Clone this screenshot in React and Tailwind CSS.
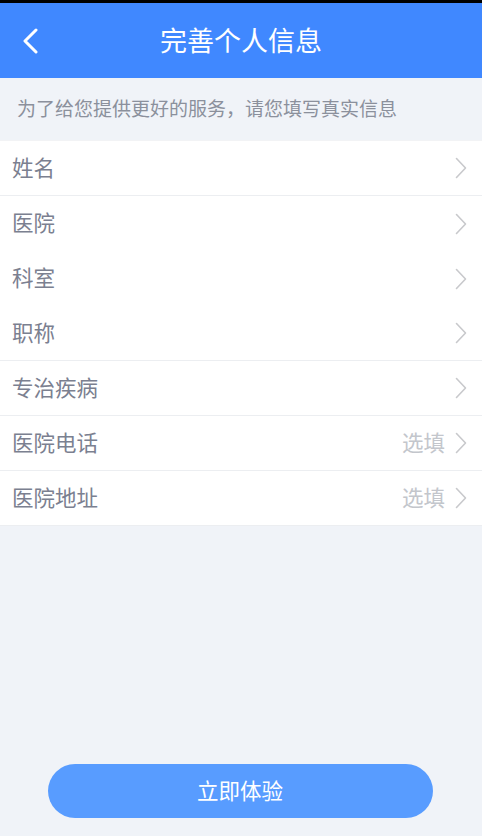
import { ChevronLeft } from "lucide-react";

const rows = [
  { label: "姓名", line: true },
  { label: "医院", line: false },
  { label: "科室", line: false },
  { label: "职称", line: true },
  { label: "专治疾病", line: true },
  { label: "医院电话", hint: "选填", line: true },
  { label: "医院地址", hint: "选填", line: true },
];

const Arrow = () => (
  <svg width="12" height="22" viewBox="0 0 12 22" fill="none" className="shrink-0">
    <path d="M1.5 1.5 L10.5 11 L1.5 20.5" stroke="#c8c9cc" strokeWidth="1.6" strokeLinecap="round" strokeLinejoin="round" />
  </svg>
);

const App = () => {
  return (
    <div
      className="w-[482px] h-[836px] bg-[#f0f3f8] flex flex-col overflow-hidden"
      style={{ fontFamily: '"Noto Sans CJK SC", "Noto Sans", sans-serif' }}
    >
      {/* status strip */}
      <div className="h-[3px] bg-black" />

      {/* Header */}
      <header className="h-[75px] bg-[#4088ff] flex items-center relative">
        <svg width="16" height="26" viewBox="0 0 16 26" fill="none" className="ml-[22px]">
          <path d="M14 2 L3 13 L14 24" stroke="white" strokeWidth="3" strokeLinecap="round" strokeLinejoin="round" />
        </svg>
        <h1 className="absolute left-0 right-0 text-center text-white text-[27px] leading-none pb-[3px] pointer-events-none">
          完善个人信息
        </h1>
      </header>

      {/* Tip */}
      <div className="h-[62px] flex items-center px-[17px] pb-[2px] text-[19px] text-[#8b909c]">
        为了给您提供更好的服务，请您填写真实信息
      </div>

      {/* Form rows */}
      <div className="bg-white border-t border-[#f2f3f5]">
        {rows.map((r, i) => (
          <div
            key={i}
            className={`h-[55px] flex items-center pl-[12px] pr-[15px] ${r.line ? "border-b border-[#eceef1]" : ""}`}
          >
            <span className="flex-1 text-[21.5px] leading-none pb-[3px] text-[#7b8090]">{r.label}</span>
            {r.hint && <span className="text-[21.5px] leading-none pb-[3px] text-[#c3c6cc] mr-[10px]">{r.hint}</span>}
            <Arrow />
          </div>
        ))}
      </div>

      <div className="flex-1" />

      {/* Submit */}
      <div className="flex justify-center pb-[18px]">
        <button className="w-[385px] h-[54px] rounded-full bg-[#589cff] text-white text-[21.5px] leading-none pb-[3px] ml-[-2px]">
          立即体验
        </button>
      </div>
    </div>
  );
};

export default App;
